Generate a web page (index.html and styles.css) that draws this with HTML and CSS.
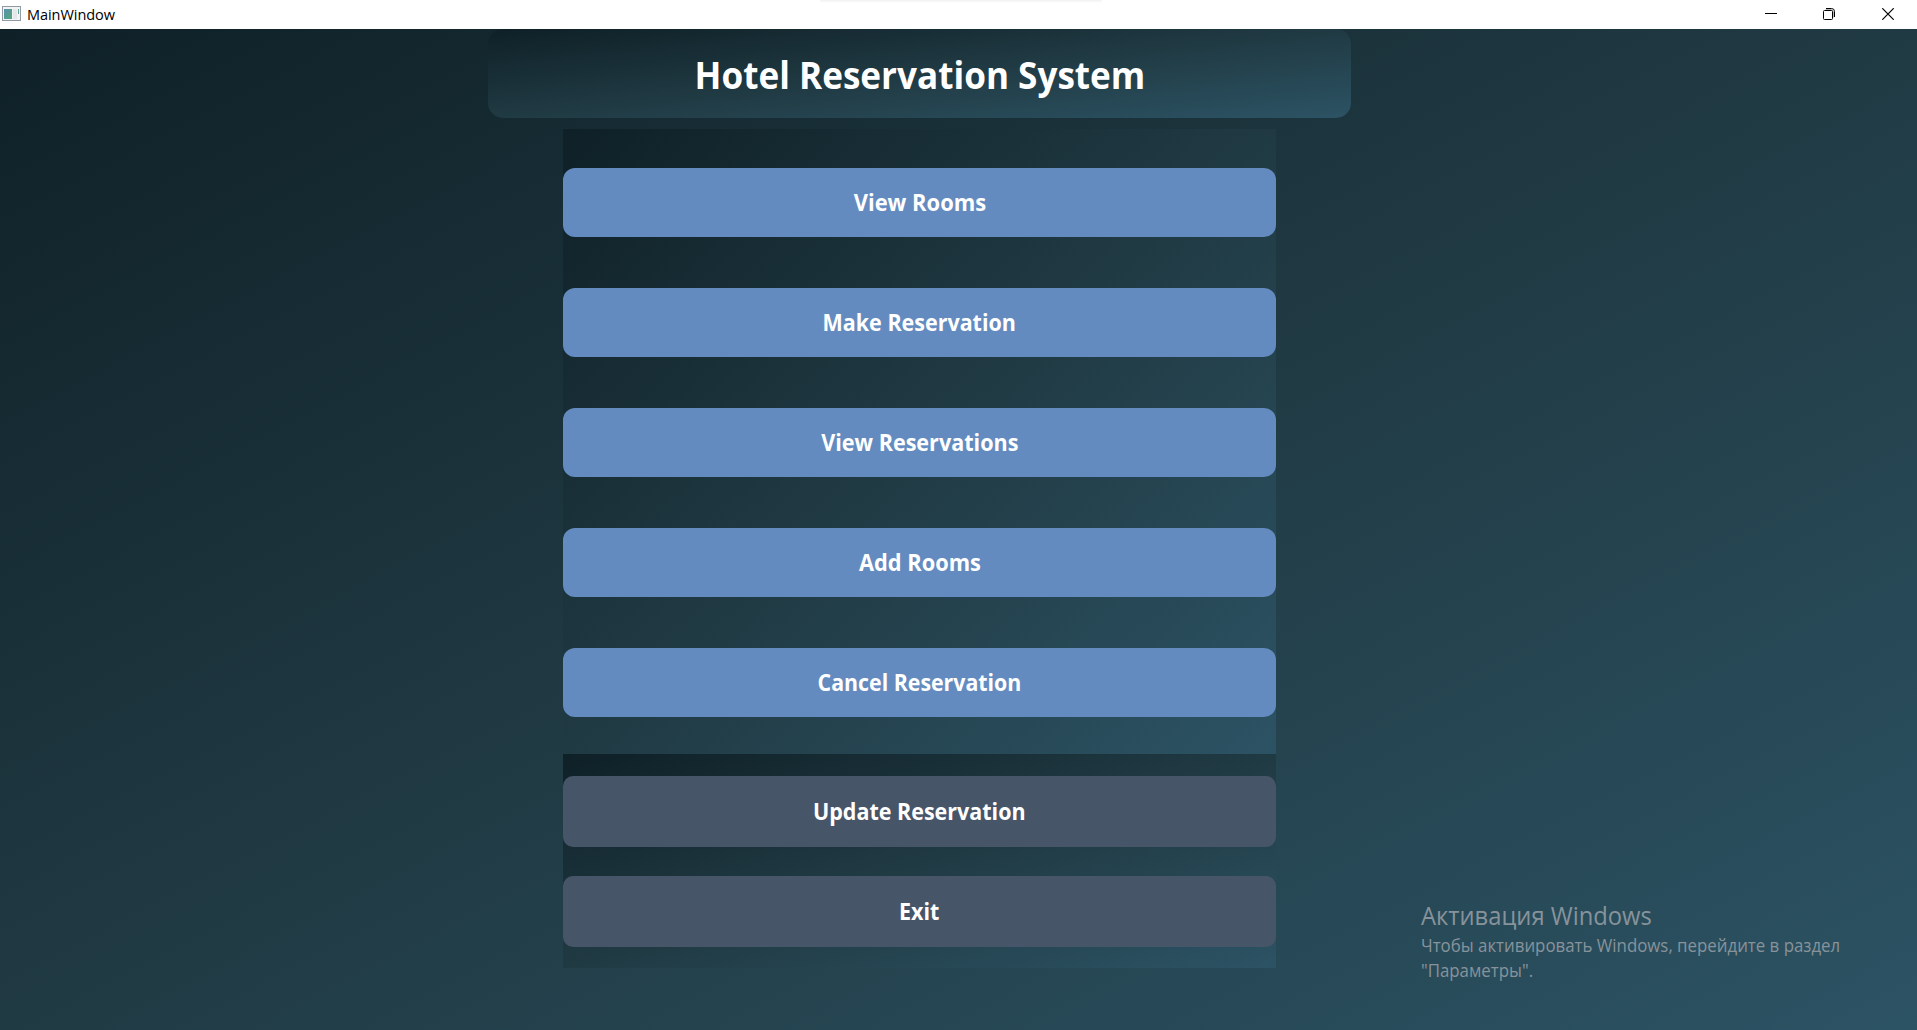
FILE: index.html
```html
<!DOCTYPE html>
<html lang="en">
<head>
<meta charset="utf-8">
<title>MainWindow</title>
<link rel="stylesheet" href="styles.css">
</head>
<body>
<header class="titlebar">
  <svg class="app-icon" width="19" height="15" viewBox="0 0 19 15">
    <defs><linearGradient id="pane" x1="0" y1="0" x2="1" y2="1"><stop offset="0" stop-color="#5b8fae"/><stop offset="1" stop-color="#4fa878"/></linearGradient></defs>
    <rect x=".5" y=".5" width="18" height="14" fill="#f1f3f4" stroke="#929ba5"/>
    <rect x="2" y="3" width="8" height="10" fill="url(#pane)"/>
    <rect x="11" y="3" width="4" height="10" fill="#e4e8e9"/>
    <rect x="16" y="3" width="1" height="5" fill="#5fa596"/>
  </svg>
  <span class="window-title">MainWindow</span>
  <div class="top-shadow"></div>
  <div class="controls">
    <svg width="12" height="12" viewBox="0 0 12 12"><path d="M0 5.5h12" stroke="#000"/></svg>
    <svg width="12" height="12" viewBox="0 0 12 12" fill="none"><path d="M3 .5h5.5q3 0 3 3V9" stroke="#000"/><path d="M2.5 1.7h6q1.8 0 1.8 1.8v6" stroke="#aaa"/><rect x=".5" y="2.5" width="9" height="9" rx="1" stroke="#000" fill="#fff"/></svg>
    <svg width="12" height="12" viewBox="0 0 12 12"><path d="M.3.3l11.4 11.4M11.7.3L.3 11.7" stroke="#000" stroke-width="1.2"/></svg>
  </div>
</header>
<main class="window">
  <h1 class="banner"><span class="banner-text">Hotel Reservation System</span></h1>
  <nav class="panel primary">
    <button class="btn blue"><span class="t-rooms">View Rooms</span></button>
    <button class="btn blue"><span class="t-make">Make Reservation</span></button>
    <button class="btn blue"><span class="t-view">View Reservations</span></button>
    <button class="btn blue"><span class="t-add">Add Rooms</span></button>
    <button class="btn blue"><span class="t-cancel">Cancel Reservation</span></button>
  </nav>
  <div class="panel secondary">
    <button class="btn slate"><span class="t-update">Update Reservation</span></button>
    <button class="btn slate"><span class="t-exit">Exit</span></button>
  </div>
  <aside class="watermark" lang="ru">
    <p class="wm-title">Активация Windows</p>
    <p class="wm-text">Чтобы активировать Windows, перейдите в раздел</p>
    <p class="wm-text">"Параметры".</p>
  </aside>
</main>
</body>
</html>
```
FILE: styles.css
```css
* { box-sizing: border-box; }
html, body { height: 100%; }
body {
  margin: 0;
  display: flex;
  flex-direction: column;
  overflow: hidden;
  font-family: "Open Sans", "Noto Sans", sans-serif;
}
.titlebar {
  position: relative;
  flex: none;
  display: flex;
  align-items: center;
  height: 29px;
  padding: 0 23px 0 2px;
  background: #fff;
}
.app-icon { display: block; margin-top: -2px; }
.window-title {
  margin-left: 6px;
  font-size: 14.5px;
  line-height: 28px;
  color: #000;
  letter-spacing: -0.05px;
}
.top-shadow {
  position: absolute;
  top: 0;
  left: 820px;
  width: 282px;
  height: 3px;
  background: linear-gradient(#f1f1f1, #fff);
  border-radius: 0 0 20px 20px;
}
.controls { display: flex; gap: 47px; margin-left: auto; }
.controls svg { display: block; margin-top: -1px; }
.controls svg:first-child { margin-right: -1px; }

.window {
  position: relative;
  flex: 1;
  display: flex;
  flex-direction: column;
  align-items: center;
  padding-right: 78px;
  background: linear-gradient(to bottom right, #0f2027, #203a43, #2c5364);
}
.banner, .panel { background: linear-gradient(to bottom right, #0f2027, #203a43, #2c5364); }
.banner {
  display: flex;
  justify-content: center;
  align-items: center;
  width: 863px;
  height: 88.5px;
  margin: 0 0 11.5px;
  padding-top: 2px;
  border-radius: 15px;
  color: #fff;
  font-size: 38px;
  line-height: 52px;
  font-weight: 700;
}
.banner-text { transform: scaleX(0.924); }
.panel { display: flex; flex-direction: column; width: 713px; }
.primary { height: 625px; padding-top: 39px; gap: 51.5px; }
.secondary { height: 214px; padding-top: 21.5px; gap: 29px; }
.btn {
  flex: none;
  display: flex;
  justify-content: center;
  align-items: center;
  padding: 1.5px 0 0;
  border: 0;
  color: #fff;
  font: 700 22.5px/32px "Open Sans", "Noto Sans", sans-serif;
}
.btn span { transform: scaleX(0.955); }
.btn .t-rooms { transform: scaleX(0.975); }
.btn .t-view { transform: scaleX(0.959); }
.btn .t-add { transform: scaleX(0.969); }
.btn .t-cancel { transform: scaleX(0.948); }
.btn span, .banner-text { white-space: nowrap; }
.blue { height: 68.5px; border-radius: 12px; background: #638bbf; }
.slate { height: 71px; border-radius: 10px; background: #475569; }

.watermark {
  position: absolute;
  left: 1421px;
  top: 868px;
  color: #87939b;
  white-space: nowrap;
}
.watermark p { margin: 0; transform-origin: left; }
.wm-title { font-size: 26px; line-height: 36px; transform: scaleX(0.914); }
.wm-text { font-size: 17.5px; line-height: 25px; transform: scaleX(0.962); }
```
